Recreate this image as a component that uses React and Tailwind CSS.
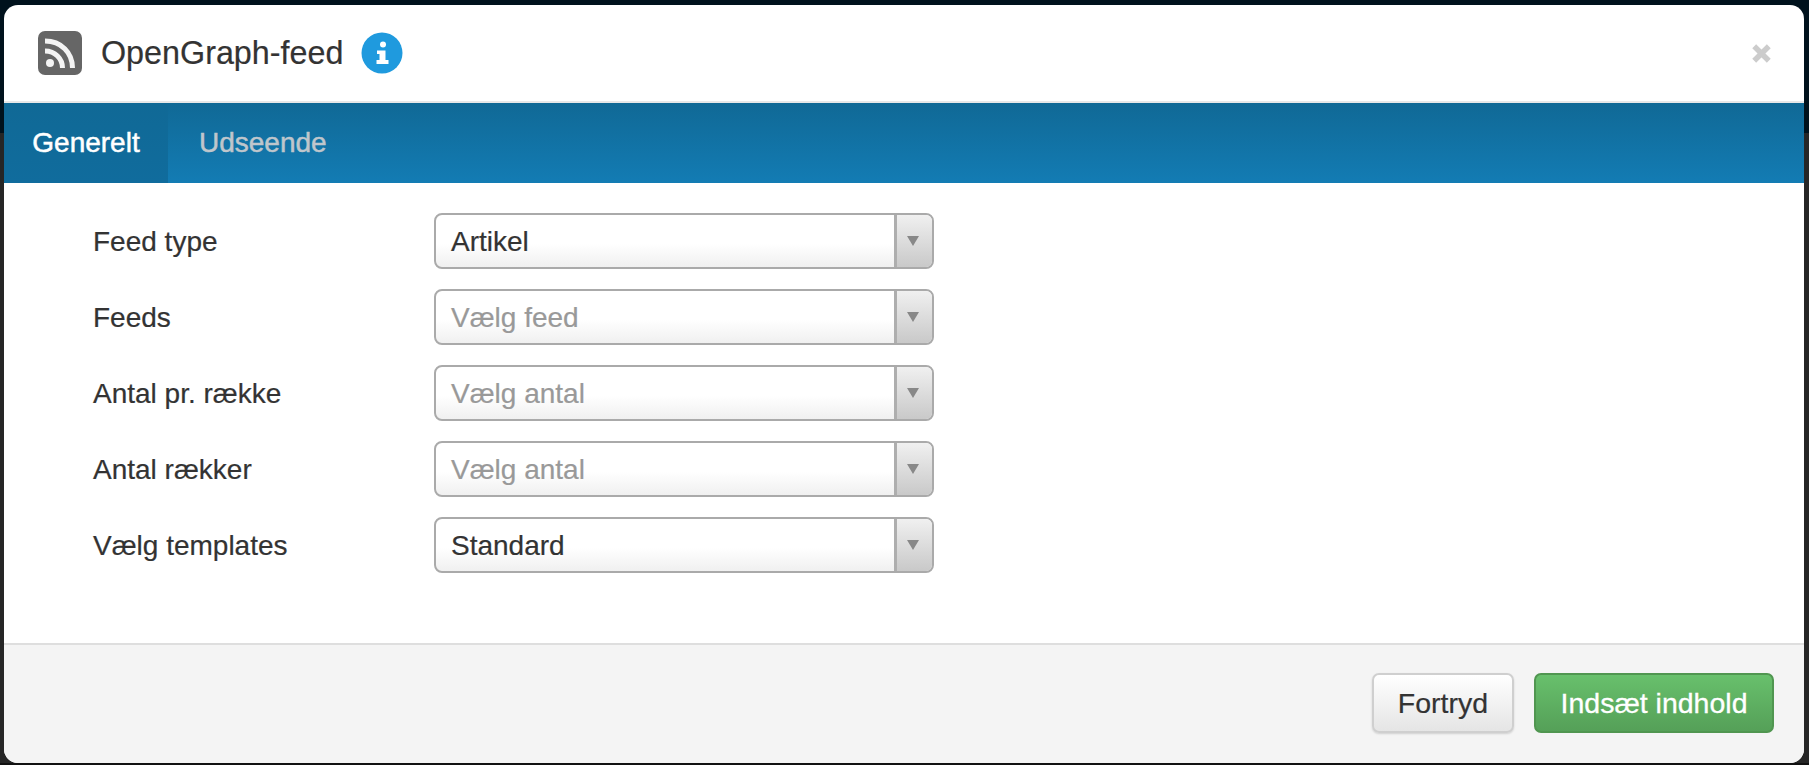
const font = { fontFamily: '"Liberation Sans", Arial, sans-serif' };

function Select({ value, placeholder }) {
  return (
    <div className="flex h-[56px] w-[500px] overflow-hidden rounded-[8px] border-2 border-[#aaaaaa] bg-gradient-to-b from-white from-[55%] to-[#f0f0f0]">
      <div className={`flex-1 pl-[15px] text-[28px] leading-[53px] [-webkit-text-stroke:0.2px] ${placeholder ? "text-[#999999]" : "text-[#333333]"}`}>{value}</div>
      <div className="flex w-[38px] items-center justify-center border-l-[3px] border-[#aeaeae] bg-gradient-to-b from-[#f0f0f0] to-[#c9c9c9] pr-[3px]">
        <svg width="12" height="10" viewBox="0 0 12 10"><path d="M0 0H12L6 10Z" fill="#888888" /></svg>
      </div>
    </div>
  );
}

function Row({ label, value, placeholder }) {
  return (
    <div className="flex h-[56px] items-center">
      <div className="w-[341px] pt-[1px] text-[28px] text-[#333333] [-webkit-text-stroke:0.2px]">{label}</div>
      <Select value={value} placeholder={placeholder} />
    </div>
  );
}

export default function App() {
  return (
    <div style={font} className="flex h-[765px] w-[1809px] flex-col overflow-hidden bg-[linear-gradient(#00121d_133px,#262626_133px,#262626_763px,#111111_763px)] pb-[2px] pl-[4px] pr-[5px] pt-[5px]">
      <div className="flex flex-1 flex-col overflow-hidden rounded-[14px] bg-white">
        <div className="flex h-[96px] items-center justify-between pl-[34px] pr-[33px]">
          <div className="flex items-center">
            <svg width="44" height="44" viewBox="0 0 44 44">
              <rect width="44" height="44" rx="7" fill="#666666" />
              <circle cx="12" cy="32" r="4" fill="#f4f4f4" />
              <path d="M7 20C17 20 24.5 27.5 24.5 37" fill="none" stroke="#f4f4f4" strokeWidth="5" />
              <path d="M7 10C23 10 34.5 21.5 34.5 37" fill="none" stroke="#f4f4f4" strokeWidth="5" />
            </svg>
            <div className="ml-[19px] text-[32.3px] leading-none text-[#333333] [-webkit-text-stroke:0.2px]">OpenGraph-feed</div>
            <svg className="ml-[18px]" width="42" height="42" viewBox="0 0 42 42">
              <circle cx="21" cy="21" r="20.5" fill="#1f9ade" />
              <circle cx="22" cy="12.5" r="3" fill="#ffffff" />
              <path d="M16 18.5H24.5V28H27.5V32H15.5V28H18.5V22H16Z" fill="#ffffff" />
            </svg>
          </div>
          <svg width="19" height="19" viewBox="0 0 19 19">
            <path d="M2.2 2.2L16.8 16.8M16.8 2.2L2.2 16.8" stroke="#cccccc" strokeWidth="5.5" />
          </svg>
        </div>
        <div className="h-[2px] bg-[#e8e8e8]" />
        <div className="flex h-[80px] bg-gradient-to-b from-[#106996] to-[#137cb4] text-[28px] [-webkit-text-stroke:0.5px]">
          <div className="flex w-[164px] items-center justify-center bg-gradient-to-b from-[#106996] to-[#106c9d] text-white">Generelt</div>
          <div className="flex items-center pl-[31px] text-[#bfc6cc]">Udseende</div>
        </div>
        <div className="flex flex-1 flex-col gap-[20px] pl-[89px] pt-[30px]">
          <Row label="Feed type" value="Artikel" />
          <Row label="Feeds" value="Vælg feed" placeholder />
          <Row label="Antal pr. række" value="Vælg antal" placeholder />
          <Row label="Antal rækker" value="Vælg antal" placeholder />
          <Row label="Vælg templates" value="Standard" />
        </div>
        <div className="flex h-[120px] items-center justify-end gap-[20px] border-t-[2px] border-[#dedede] bg-[#f4f4f4] pb-[2px] pr-[30px]">
          <button className="h-[60px] w-[142px] rounded-[7px] border-2 border-[#cfcfcf] bg-gradient-to-b from-white to-[#e5e5e5] text-[28.5px] text-[#333333] shadow-[0_1px_2px_rgba(0,0,0,0.15)] [-webkit-text-stroke:0.2px]">Fortryd</button>
          <button className="h-[60px] w-[240px] rounded-[7px] border-2 border-[#509650] bg-gradient-to-b from-[#68c06c] to-[#55a058] text-[28.5px] text-white [-webkit-text-stroke:0.3px]">Indsæt indhold</button>
        </div>
      </div>
    </div>
  );
}
